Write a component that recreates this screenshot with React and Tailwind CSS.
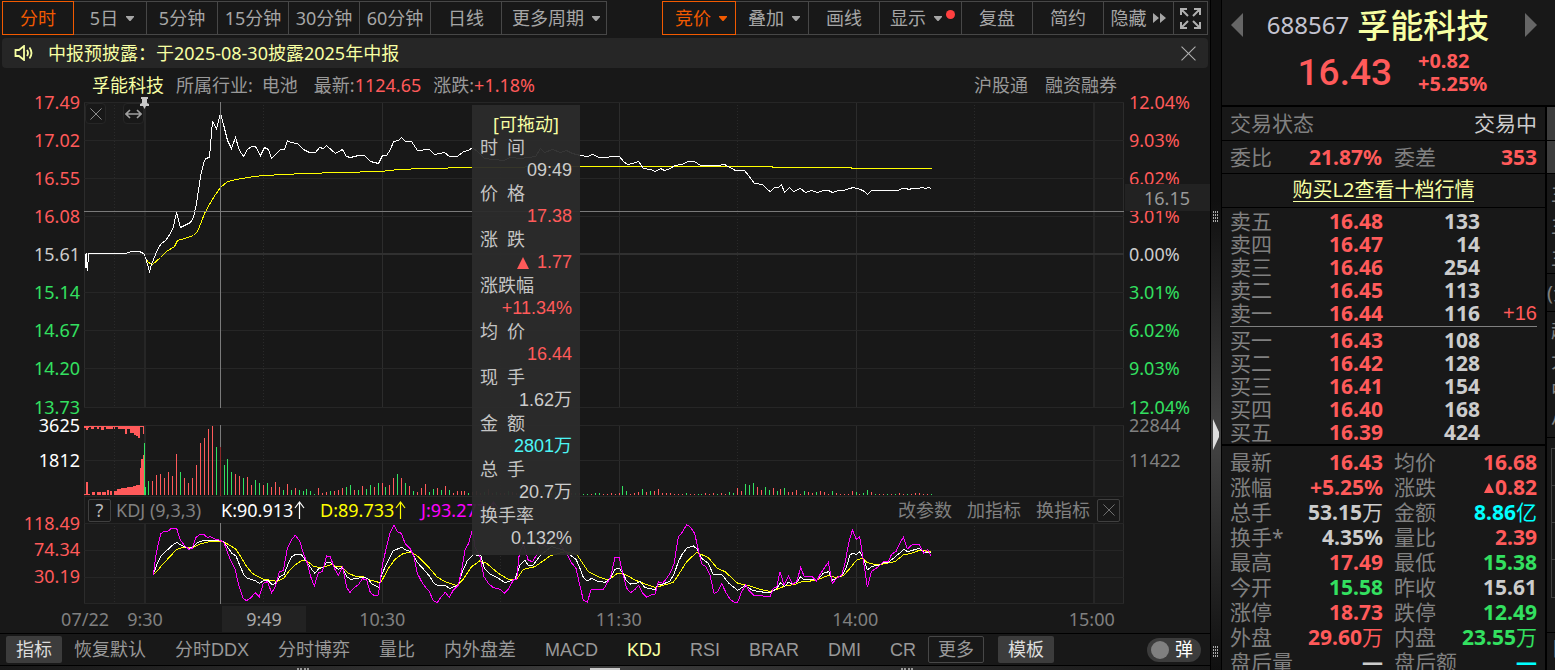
import React, {useState} from 'react'
import clsx from 'clsx'

const RED = 'text-[#ff5a5a]'
const GREEN = 'text-[#33e060]'
const GREY = 'text-[#cccccc]'
const CYAN = 'text-[#00ffff]'

const periods = [
	{ name: '分时', width: 'w-[72px]', active: true },
	{ name: '5日', width: 'w-[74px]', caret: true },
	{ name: '5分钟', width: 'w-[72px]' },
	{ name: '15分钟', width: 'w-[72px]' },
	{ name: '30分钟', width: 'w-[72px]' },
	{ name: '60分钟', width: 'w-[72px]' },
	{ name: '日线', width: 'w-[72px]' },
	{ name: '更多周期', width: 'w-[106px]', caret: true }
]

const tools = [
	{ name: '竞价', width: 'w-[74px]', active: true, caret: true },
	{ name: '叠加', width: 'w-[74px]', caret: true },
	{ name: '画线', width: 'w-[72px]' },
	{ name: '显示', width: 'w-[83px]', caret: true, dot: true },
	{ name: '复盘', width: 'w-[72px]' },
	{ name: '简约', width: 'w-[72px]' },
	{ name: '隐藏', width: 'w-[71px]', forward: true }
]

const priceScale = ['17.49', '17.02', '16.55', '16.08', '15.61', '15.14', '14.67', '14.20', '13.73']
const percentScale = ['12.04%', '9.03%', '6.02%', '3.01%', '0.00%', '3.01%', '6.02%', '9.03%', '12.04%']

const hoverInfo = [
	{ label: '时\u2002间', value: '09:49', color: GREY },
	{ label: '价\u2002格', value: '17.38', color: RED },
	{ label: '涨\u2002跌', value: '1.77', color: RED, up: true },
	{ label: '涨跌幅', value: '+11.34%', color: RED },
	{ label: '均\u2002价', value: '16.44', color: RED },
	{ label: '现\u2002手', value: '1.62万', color: GREY },
	{ label: '金\u2002额', value: '2801万', color: 'text-[#4df5f5]' },
	{ label: '总\u2002手', value: '20.7万', color: GREY },
	{ label: '换手率', value: '0.132%', color: GREY }
]

const indicators = ['恢复默认', '分时DDX', '分时博弈', '量比', '内外盘差', 'MACD', 'KDJ', 'RSI', 'BRAR', 'DMI', 'CR']

const sells = [
	['卖五', '16.48', '133'],
	['卖四', '16.47', '14'],
	['卖三', '16.46', '254'],
	['卖二', '16.45', '113'],
	['卖一', '16.44', '116', '+16']
]

const buys = [
	['买一', '16.43', '108'],
	['买二', '16.42', '128'],
	['买三', '16.41', '154'],
	['买四', '16.40', '168'],
	['买五', '16.39', '424']
]

// label, value, unit, color
const stats = [
	[['最新', '16.43', '', RED], ['均价', '16.68', '', RED]],
	[['涨幅', '+5.25%', '', RED], ['涨跌', '0.82', '', RED, true]],
	[['总手', '53.15', '万', GREY], ['金额', '8.86', '亿', CYAN]],
	[['换手*', '4.35%', '', GREY], ['量比', '2.39', '', RED]],
	[['最高', '17.49', '', RED], ['最低', '15.38', '', GREEN]],
	[['今开', '15.58', '', GREEN], ['昨收', '15.61', '', GREY]],
	[['涨停', '18.73', '', RED], ['跌停', '12.49', '', GREEN]],
	[['外盘', '29.60', '万', RED], ['内盘', '23.55', '万', GREEN]],
	[['盘后量', '—', '', GREY], ['盘后额', '—', '', CYAN]]
]

const preOpenLine = '85,254 85,268 86,254 86,266 87,271 88,254 125,254 131,252 139,252 143,254 145,257'
const priceLine = '145,257 147,264 149,271 151,264 155,254 158,247 161,243 165,240 170,233 173,226 176,212 180,227 184,225 190,222 193,217 196,203 200,176 203,163 205,158 209,157 212,121 216,128 220,113 223,124 227,140 231,148 235,137 239,150 243,156 247,149 251,146 255,146 260,155 264,147 268,149 271,158 276,153 280,149 284,149 287,140 290,142 297,143 303,149 309,152 315,152 319,147 323,148 326,145 335,153 342,149 346,156 350,157 358,155 364,155 370,161 378,163 382,155 386,155 390,149 393,141 398,140 401,137 405,141 411,141 417,150 429,149 434,154 444,152 449,156 457,156 463,151 468,150 472,147 478,152 484,158 503,160 510,157 520,158 535,156 540,148 544,152 552,149 560,152 566,150 572,153 580,155 587,156 592,154 599,157 619,156 623,161 627,164 632,163 638,161 643,168 650,169 655,171 660,168 664,170 670,168 674,165 682,164 687,161 694,161 700,165 717,165 724,164 735,170 744,170 748,175 754,183 762,184 768,190 770,191 774,187 778,187 781,184 784,192 789,187 793,191 800,188 805,192 811,190 817,192 823,190 828,190 832,192 838,190 843,190 849,188 853,187 860,189 864,191 867,194 871,190 897,190 902,188 906,188 908,189 912,188 917,188 922,187 925,188 928,187 931,188'
const averageLine = '145,258 148,262 152,264 160,257 166,251 174,246 177,240 184,238 193,235 197,231 201,221 204,213 210,202 215,194 220,187 227,181 236,179 247,177 263,175 284,174 304,173 340,172 380,171 398,169 424,168 472,167 580,166 771,166 773,167 850,167 852,168 931,168'

// one entry for each minute, the letter gives the direction
const volumes = ('g14 r14 r20 r21 r17 r23 r19 r41 g23 r17 r12 r17 r30 r52 r57 r66 r69 g48 r48 g30 g36 g23 r21 r19 g17 r18 r10 g15 g12 r10 '
	+ 'g12 r8 r13 r8 g5 r11 g5 r7 g5 g4 g6 g4 g1 r7 r2 r3 g4 r4 r5 r7 g8 g10 r5 g5 r9 g6 g10 r8 g12 r12 '
	+ 'g8 r10 r17 g21 r17 g12 r9 g4 r3 r7 r11 g3 g6 r7 g5 r9 g5 r2 r4 r4 r4 g2 '
	+ 'r3 r4 r2 g3 r6 r2 g3 r2 r2 g4 r3 r2 g2 r3 r3 g2 r4 r2 g3 r2 r2 g3 r2 r3 g2 r2 g2 r2 '
	+ 'g1 g1 r1 g2 g2 r1 r1 r2 r1 r2 g9 g4 r1 r2 r3 g6 r3 g4 r4 r6 r2 '
	+ 'r2 r2 r1 r1 r1 g2 r1 r1 g1 g1 r2 r1 r2 g1 r2 r1 g3 g2 r7 r4 g11 g10 g12 r8 '
	+ 'r5 g8 g5 r7 g4 r6 g7 r3 r3 r5 r1 g4 r3 r2 g3 r4 r3 r1 g4 r2 r1 r1 r1 r4 g3 r1 g2 g5 r3 '
	+ 'g1 r1 r1 g1 r1 g1 r2 r1 g1 r1 r2 r2 r1 r1 g1').split(' ')

// call auction volume: x, width, height
const auctionBottom = [[84, 6, 1], [86, 2, 13], [92, 3, 3], [97, 4, 3], [102, 4, 3], [107, 2, 5], [110, 2, 4], [114, 3, 4], [117, 4, 6], [121, 6, 7], [127, 6, 8], [133, 3, 9], [136, 4, 10], [140, 1, 27], [141, 2, 36], [143, 1, 40]]
const auctionTop = [[84, 5, 2], [86, 2, 4], [91, 3, 3], [97, 2, 3], [101, 3, 4], [106, 3, 3], [109, 4, 3], [114, 1, 3], [118, 4, 3], [122, 3, 3], [125, 2, 8], [127, 4, 3], [130, 4, 7], [134, 2, 9], [136, 2, 10], [138, 2, 12], [141, 2, 1], [143, 1, 8]]

// [start x, points] segments, in units of a third of a pixel
const kdj = [
	{
		color: '#ffff00',
		segments: [
			[0, '458,524 470,515 482,500 505,475 530,448 545,443 577,443 600,432 625,426 668,425 685,433 708,448 722,470 740,500 757,520 775,530 790,537 832,544 852,534 870,510 885,495 905,482 920,482 940,498 957,503 975,500 995,493 1010,500 1025,500 1045,520 1065,528 1090,530 1110,540 1140,548'],
			[1140, '5,543 25,505 45,478 70,460 95,457 115,470 145,500 170,530 195,545 230,557 250,537 275,500 300,482 320,490 355,520 385,538 410,538 430,508 465,500 510,468 555,455 590,463 605,485 625,515 655,530 685,540 712,520 735,523 765,540 795,552 825,562 850,556 880,547 895,525 920,485 950,457 985,473 1012,505 1035,515 1073,550 1110,558'],
			[2280, '0,568 30,574 50,568 75,558 105,553 125,545 165,542 205,526 225,532 250,527 270,505 290,480 308,474 320,487 345,494 370,492 405,485 430,465 460,458 480,450 512,455']
		]
	},
	{
		color: '#ffffff',
		segments: [
			[0, '460,522 470,495 482,470 493,458 505,447 517,436 530,427 541,434 565,445 577,443 592,428 612,421 661,421 672,427 684,443 696,460 708,468 720,498 732,525 742,535 766,542 778,550 790,543 803,540 817,555 828,548 840,530 852,524 865,490 875,470 887,463 905,465 920,485 935,508 945,520 957,505 968,503 980,487 992,488 1004,500 1015,508 1027,503 1040,530 1052,538 1090,532 1103,535 1115,552 1137,563'],
			[1140, '3,530 20,490 40,452 65,442 77,450 95,455 110,485 130,507 150,530 160,548 172,556 195,557 210,565 235,555 245,520 262,482 280,463 303,468 313,505 330,522 355,535 375,548 405,538 420,495 435,480 445,497 458,497 482,465 515,440 550,450 570,465 588,478 598,500 610,532 622,543 635,535 650,543 675,547 690,537 705,508 718,505 730,522 740,543 752,552 768,550 780,545 795,563 825,569 835,552 850,552 870,543 883,520 895,485 908,460 922,443 940,438 952,448 965,475 985,490 1000,525 1025,523 1047,550 1073,571 1095,557 1120,572'],
			[2280, '0,575 30,579 50,566 62,547 73,560 85,547 98,552 110,547 122,530 133,540 157,537 170,542 190,520 206,515 218,540 245,527 258,505 270,465 277,460 290,463 300,455 310,475 322,510 335,500 360,494 372,487 385,487 400,475 418,460 432,448 443,455 478,445 491,457 512,458']
		]
	},
	{
		color: '#ff00ff',
		segments: [
			[0, '459,526 462,510 468,465 475,430 482,402 490,396 505,393 513,386 530,385 540,418 555,438 567,448 577,445 588,412 600,403 612,404 622,412 632,410 645,417 661,421 672,428 684,462 696,490 706,510 716,555 730,596 740,602 752,594 766,578 778,590 790,550 802,545 815,578 826,560 838,515 850,512 862,445 875,418 886,406 900,425 910,460 922,490 932,530 943,558 955,518 967,515 980,468 991,470 1003,505 1015,525 1028,500 1040,562 1050,577 1063,562 1075,555 1087,536 1100,540 1111,578 1123,587 1135,585'],
			[1140, '8,490 20,440 30,400 42,374 52,395 64,400 76,432 90,445 102,470 112,520 125,545 135,560 148,575 160,602 172,608 184,590 196,577 208,592 220,570 235,555 245,510 255,450 265,432 277,390 285,440 300,470 312,530 325,550 340,563 360,568 373,580 385,568 400,540 410,538 418,460 430,430 445,482 458,484 470,465 482,430 500,440 520,400 545,440 560,460 572,485 588,505 598,550 610,600 622,606 634,567 650,570 670,568 680,552 692,530 705,472 718,473 728,520 740,565 752,578 765,568 776,556 787,578 800,592 812,585 825,583 835,545 848,550 860,535 870,520 882,492 895,410 907,397 920,374 932,382 944,400 955,450 965,492 978,500 990,525 1002,580 1013,575 1025,550 1038,578 1050,597 1063,607 1073,607 1085,575 1097,555 1108,573 1120,585 1133,587'],
			[2280, '0,587 30,590 40,565 50,562 60,515 72,555 85,528 98,553 110,545 122,503 133,530 157,530 170,543 182,520 205,487 217,550 230,535 245,525 255,490 266,430 277,390 289,418 299,410 310,480 322,562 334,515 355,500 372,483 385,485 395,462 408,455 418,432 430,412 442,447 455,435 478,433 491,460 503,448 512,467']
		]
	}
]

const joinSegments = (segments) =>
	segments.map(([start, points]) =>
		points.split(' ').map(p => {
			const [x, y] = p.split(',').map(Number)
			return `${x + start},${y}`
		}).join(' ')
	).join(' ')


const Caret = () => (
	<svg width="8" height="5" viewBox="0 0 8 5" className="shrink-0"><path d="M0 0h8v1L4.500 5h-1L0 1z" fill="currentColor" /></svg>
)

const Cross = ({size}) => (
	<svg width={size} height={size} viewBox="0 0 14 14"><path d="M.5.5l13 13M13.500.5l-13 13" stroke="currentColor" strokeWidth="1" fill="none" /></svg>
)

const UpArrow = () => (
	<svg width="11" height="18" viewBox="0 0 11 18" className="ml-px"><path d="M5.500 1v17M1 7l4.500-6L10 7" stroke="currentColor" strokeWidth="1.200" fill="none" /></svg>
)

const Grip = ({className}) => (
	<svg width="6" height="12" viewBox="0 0 6 12" className={className}>
		{[0, 3, 6, 9].map(y => [0, 2, 4].map(x => <rect key={x + '-' + y} x={x} y={y} width="1" height="2" fill="#aaaaaa" />))}
	</svg>
)

function ToolButton({name, width, active, caret, dot, forward})
{
	return (
		<button
			type="button"
			className={clsx(
				'relative -ml-px flex h-[34px] items-center justify-center border text-[18px] whitespace-nowrap',
				width,
				forward && 'gap-[6px]',
				caret && 'gap-2',
				caret && 'pl-1',
				active ? 'z-10 border-[#f25a00] text-[#f25a00]' : 'border-[#474747] text-[#a6a6a6]'
			)}
		>
			{name}
			{caret && <Caret />}
			{dot && <span className="-ml-1 mb-2 size-[9px] rounded-full bg-[#ff4040]" />}
			{forward && <svg width="14" height="10" viewBox="0 0 14 10"><path d="M0 0l6 5-6 5zM7 0l6 5-6 5z" fill="currentColor" /></svg>}
		</button>
	)
}

// vertical lines and shaded margins that all three panels share
function GridColumns({top, bottom, scale = 1})
{
	const line = { vectorEffect: 'non-scaling-stroke', shapeRendering: 'crispEdges' }
	return (
		<g>
			<rect x={84 * scale} y={top} width={61 * scale} height={bottom - top} fill="#1b1b1b" />
			<rect x={1094 * scale} y={top} width={30 * scale} height={bottom - top} fill="#1b1b1b" />
			{[84.5, 382.5, 619.5, 856.5, 1123.5].map(x =>
				<line key={x} x1={x * scale} x2={x * scale} y1={top} y2={bottom} stroke="#2c2c2c" {...line} />
			)}
			{[145, 1094].map(x =>
				<line key={x} x1={x * scale} x2={x * scale} y1={top} y2={bottom} stroke="#262626" strokeWidth="2" {...line} />
			)}
			{[114.5, 263.5, 500.5, 737.5, 974.5].map(x =>
				<line key={x} x1={x * scale} x2={x * scale} y1={top} y2={bottom} stroke="#2a2a2a" strokeDasharray="1 2" {...line} />
			)}
		</g>
	)
}

function Rows({ys, scale = 1})
{
	return ys.map(y =>
		<line key={y} x1={84 * scale} x2={1124 * scale} y1={y} y2={y} stroke="#262626" vectorEffect="non-scaling-stroke" shapeRendering="crispEdges" />
	)
}

function PriceChart()
{
	return (
		<svg className="h-full w-full" viewBox="84 102 1040 306" preserveAspectRatio="none" shapeRendering="crispEdges" fill="none">
			<GridColumns top={102} bottom={408} />
			<Rows ys={[102.5, 140.5, 178.5, 216.5, 292.5, 330.5, 368.5, 407.5]} />
			<line x1="84" x2="1124" y1="254" y2="254" stroke="#303030" strokeWidth="2" />
			<g transform="translate(.5 .5)">
				<polyline points={averageLine} stroke="#ffff00" />
				<polyline points={priceLine} stroke="#ffffff" />
			</g>
			<polyline points={preOpenLine} transform="translate(.5 -.5)" stroke="#ffffff" />
			<path d="M220.500 102v306M84 211.500h1040" stroke="#7a7a7a" />
		</svg>
	)
}

function VolumeChart()
{
	return (
		<svg className="h-full w-full" viewBox="84 425 1040 71" preserveAspectRatio="none" shapeRendering="crispEdges" fill="none">
			<GridColumns top={425} bottom={496} />
			<Rows ys={[425.5, 460.5]} />
			{auctionBottom.map(([x, w, h]) => <rect key={x} x={x} y={495 - h} width={w} height={h} fill="#ff5a5a" />)}
			{auctionTop.map(([x, w, h]) => <rect key={x} x={x} y={426} width={w} height={h} fill="#ff5a5a" />)}
			<path d="M84 426.500h60" stroke="#ff5a5a" />
			<path d="M144.500 443v52M145.500 487v8" stroke="#33e060" />
			{volumes.map((v, i) =>
				<rect
					key={i}
					x={Math.round(144.5 + 3.95 * (i + 1))}
					y={495 - Number(v.slice(1))}
					width="1"
					height={v.slice(1)}
					fill={v[0] === 'r' ? '#ff5a5a' : '#33e060'}
				/>
			)}
			<path d="M220.500 425v22" stroke="#7a7a7a" />
			<path d="M220.500 447v49" stroke="#8c2a2a" />
		</svg>
	)
}

function KdjChart()
{
	return (
		<svg className="h-full w-full" viewBox="252 369 3120 243" preserveAspectRatio="none" shapeRendering="crispEdges" fill="none">
			<GridColumns top={369} bottom={612} scale={3} />
			<Rows ys={[370.5, 451.5, 532.5, 610.5]} scale={3} />
			<line x1="661.5" x2="661.5" y1="369" y2="612" stroke="#7a7a7a" vectorEffect="non-scaling-stroke" />
			{kdj.map(({color, segments}) =>
				<polyline key={color} points={joinSegments(segments)} stroke={color} vectorEffect="non-scaling-stroke" />
			)}
		</svg>
	)
}

// labels are centred on the grid lines, so each one is a box without height
function Scale({values, colorOf, className})
{
	return (
		<div className={clsx('-mt-px mb-px flex flex-col justify-between', className)}>
			{values.map((value, i) =>
				<div key={i} className={clsx('flex h-px items-center', colorOf(i))}>{value}</div>
			)}
		</div>
	)
}

const scaleColor = (i) => i < 4 ? RED : i === 4 ? GREY : GREEN

function HoverCard()
{
	return (
		<div className="absolute top-[3px] left-[472px] z-10 w-[108px] bg-[#2b2b2b]/95 px-2 pt-[7px] pb-[5px] text-[18px] leading-[23px] text-[#c4c4c4]">
			<div className="text-center leading-[24px] text-[#f7ffa3]">[可拖动]</div>
			<dl>
				{hoverInfo.map(({label, value, color, up}) => (
					<div key={label}>
						<dt>{label}</dt>
						<dd className={clsx("flex items-center justify-end gap-2 font-['Liberation_Sans','Noto_Sans_CJK_SC',sans-serif]", color)}>
							{up && <svg width="12" height="12" viewBox="0 0 12 12"><path d="M6 0l6 12H0z" fill="currentColor" /></svg>}
							{value}
						</dd>
					</div>
				))}
			</dl>
		</div>
	)
}

function Charts()
{
	return (
		<div className="relative flex min-h-0 flex-1 flex-col text-[18px] leading-none">
			<div className="flex min-h-0 flex-1">
				<Scale values={priceScale} colorOf={scaleColor} className="w-[84px] items-end pr-1" />
				<div className="relative min-w-0 flex-1">
					<div className="absolute inset-0"><PriceChart /></div>
					<button type="button" aria-label="关闭" className="absolute top-px left-px flex size-[21px] items-center justify-center rounded border border-[#262626] bg-[#181818] text-[#a0a0a0]">
						<Cross size={12} />
					</button>
					<button type="button" aria-label="拉伸" className="absolute top-px left-[39px] flex size-[21px] items-center justify-center rounded border border-[#262626] bg-[#181818] text-[#a0a0a0]">
						<svg width="17" height="10" viewBox="0 0 17 10"><path d="M1 5h15M5 1L1 5l4 4M12 1l4 4-4 4" stroke="currentColor" strokeWidth="1.600" fill="none" /></svg>
					</button>
					<svg width="9" height="12" viewBox="0 0 9 12" className="absolute -top-[5px] left-[56px]"><path d="M1 0h7v2H7v4l2 1v2H6l-1.500 3L3 9H0V7l2-1V2H1z" fill="#c8c8c8" /></svg>
				</div>
				<div className="relative flex w-[86px]">
					<Scale values={percentScale} colorOf={scaleColor} className="pl-[5px]" />
					<div className="absolute top-[82px] right-0 left-px flex h-[27px] items-center justify-end bg-[#222222] pr-5 text-[#999999]">16.15</div>
				</div>
			</div>

			<div className="mt-[17px] flex h-[71px]">
				<Scale values={['3625', '1812', '']} colorOf={() => 'text-white'} className="w-[84px] items-end pr-1" />
				<div className="min-w-0 flex-1"><VolumeChart /></div>
				<Scale values={['22844', '11422', '']} colorOf={() => 'text-[#808080]'} className="w-[86px] pl-[5px]" />
			</div>

			<div className="mr-[86px] ml-[84px] flex h-[27px] items-center border border-b-0 border-[#262626] pr-[3px] pl-[3px] text-[#808080]">
				<button type="button" aria-label="帮助" className="flex size-[23px] items-center justify-center rounded-xs border border-[#404040] text-[#bbbbbb]">?</button>
				<span className="ml-[5px] w-[105px]">KDJ (9,3,3)</span>
				<span className="flex w-[99px] items-center text-white">K:90.913<UpArrow /></span>
				<span className="flex w-[101px] items-center text-[#ffff00]">D:89.733<UpArrow /></span>
				<span className="flex items-center text-[#ff00ff]">J:93.277<UpArrow /></span>
				<div className="ml-auto flex items-center gap-[15px]">
					<button type="button">改参数</button>
					<button type="button">加指标</button>
					<button type="button">换指标</button>
				</div>
				<button type="button" aria-label="关闭指标" className="ml-[7px] flex size-[23px] items-center justify-center rounded-xs border border-[#404040]">
					<Cross size={12} />
				</button>
			</div>

			<div className="flex h-[81px]">
				<Scale values={['118.49', '74.34', '30.19', '']} colorOf={() => RED} className="w-[84px] items-end pr-1" />
				<div className="min-w-0 flex-1"><KdjChart /></div>
				<div className="w-[86px]" />
			</div>

			<div className="relative flex h-[29px] items-center text-center text-[#808080]">
				<span className="w-[109px] text-right">07/22</span>
				<span className="w-[72px]">9:30</span>
				<span className="w-[83px]" />
				<span className="flex-1">10:30</span>
				<span className="flex-1">11:30</span>
				<span className="flex-1">14:00</span>
				<span className="flex-1">15:00</span>
				<span className="absolute top-[2px] left-[222px] flex h-[26px] w-[84px] items-center justify-center bg-[#222222] text-[#aaaaaa]">9:49</span>
			</div>

			<HoverCard />
		</div>
	)
}

function IndicatorTabs()
{
	const [current, setCurrent] = useState('KDJ')
	const [popup, setPopup] = useState(false)

	return (
		<div className="flex h-[33px] shrink-0 items-center border-y border-black pr-[9px] pl-[6px] font-['Liberation_Sans','Noto_Sans_CJK_SC',sans-serif] text-[18px] leading-none whitespace-nowrap text-[#999999]">
			<button type="button" className="h-[27px] w-[56px] rounded-xs bg-[#3c3c3c] text-[#dddddd]">指标</button>
			<div className="ml-[12px] flex gap-[29px]">
				{indicators.map(name =>
					<button
						key={name}
						type="button"
						onClick={() => setCurrent(name)}
						className={current === name ? 'text-[#f7ffa3]' : ''}
					>
						{name}
					</button>
				)}
			</div>
			<button type="button" className="ml-[12px] h-[27px] w-[56px] rounded-xs border border-[#474747]">更多</button>
			<button type="button" className="ml-[14px] h-[27px] w-[56px] rounded-xs bg-[#3c3c3c] text-[#dddddd]">模板</button>
			<label className="ml-auto flex h-[24px] w-[54px] items-center justify-between rounded-full bg-[#3c3c3c] pr-2 pl-1 text-white">
				<input type="checkbox" className="sr-only" checked={popup} onChange={e => setPopup(e.target.checked)} />
				<span className="size-[18px] rounded-full bg-[#808080]" />
				弹
			</label>
		</div>
	)
}

function OrderTable({rows})
{
	return (
		<table className="w-full table-fixed">
			<tbody>
				{rows.map(([label, price, amount, change]) => (
					<tr key={label} className="h-[23px] text-right leading-[23px]">
						<th scope="row" className="w-[63px] p-0 text-left font-normal text-[#808080]">{label}</th>
						<td className={clsx('w-[90px] p-0 font-bold', RED)}>{price}</td>
						<td className={clsx('w-[97px] p-0 font-bold', GREY)}>{amount}</td>
						<td className={clsx("p-0 font-['Liberation_Sans',sans-serif] text-[20px]", RED)}>{change}</td>
					</tr>
				))}
			</tbody>
		</table>
	)
}

function StatCell({cell})
{
	const [label, value, unit, color, up] = cell
	return (
		<div className="flex h-[25px] items-center justify-between">
			<dt className="text-[#808080]">{label}</dt>
			<dd className={clsx('flex items-center', color)}>
				{up && <svg width="10" height="10" viewBox="0 0 10 10" className="mr-px"><path d="M5 0l5 10H0z" fill="currentColor" /></svg>}
				<span className="font-bold">{value}</span>
				{unit}
			</dd>
		</div>
	)
}

function QuotePanel()
{
	return (
		<aside className="flex w-[333px] shrink-0 flex-col text-[21px] leading-none">
			<header className="h-[107px] shrink-0 border-b-2 border-black px-2 pt-1">
				<div className="flex h-[42px] items-center justify-between pr-[10px] pl-px">
					<button type="button" aria-label="上一只"><svg width="12" height="24" viewBox="0 0 12 24"><path d="M12 0v24L0 12z" fill="#666666" /></svg></button>
					<h1 className="flex items-center gap-2 pr-3">
						<span className="text-[24px] text-[#c4c4d0]">688567</span>
						<span className="text-[33px] font-medium text-[#f7ffa3]">孚能科技</span>
					</h1>
					<button type="button" aria-label="下一只"><svg width="12" height="24" viewBox="0 0 12 24"><path d="M0 0v24l12-12z" fill="#666666" /></svg></button>
				</div>
				<div className={clsx('flex items-center justify-center gap-[26px] pt-[3px] pl-2', RED)}>
					<span className="font-['Roboto','Liberation_Sans',sans-serif] text-[37px] font-medium">16.43</span>
					<span className="text-[20px] leading-[23px] font-bold">+0.82<br />+5.25%</span>
				</div>
			</header>

			<div className="flex min-h-0 flex-1">
				<div className="min-w-0 flex-1">
					<div className="flex h-[34px] items-center justify-between border-b border-black px-2">
						<span className="text-[#808080]">交易状态</span>
						<span className={GREY}>交易中</span>
					</div>
					<div className="flex h-[33px] items-center border-b border-black px-2 text-[#808080]">
						<span>委比</span>
						<b className={clsx('ml-auto', RED)}>21.87%</b>
						<span className="ml-3">委差</span>
						<b className={clsx('w-[101px] text-right', RED)}>353</b>
					</div>
					<div className="flex h-[34px] items-center justify-center border-b border-black text-[20px]">
						<a href="#l2" className="border-b border-[#f7ffa3] pb-px text-[#f7ffa3]">购买L2查看十档行情</a>
					</div>
					<div className="border-b-2 border-black px-2 pt-[2px]">
						<OrderTable rows={sells} />
						<hr className="mt-px mb-[2px] border-[#808080]" />
						<OrderTable rows={buys} />
					</div>
					<div className="px-2 pt-1">
						{stats.map(([left, right]) => (
							<dl key={left[0]} className="grid grid-cols-[153px_1fr] gap-x-[11px]">
								<StatCell cell={left} />
								<StatCell cell={right} />
							</dl>
						))}
					</div>
				</div>
				<SideStrip />
			</div>
		</aside>
	)
}

// the next column of the terminal, of which only the edge is in view
function SideStrip()
{
	return (
		<div className="w-[10px] shrink-0 overflow-hidden border-l-2 border-black text-[20px] whitespace-nowrap text-[#808080]">
			<div className="h-[34px] border-b border-black bg-[#3c3c3c]" />
			<div className="h-[33px] border-b border-black bg-[#3c3c3c]" />
			<div className="h-[100px] border-b border-black pt-1 pl-1 leading-[32px]">主<br />主<br />主</div>
			<div className="h-[38px] border-b border-black leading-[38px]">(元)</div>
			<div className="h-[126px] border-b border-black pt-1 pl-1 leading-[30px]">超<br />大<br />中<br />小</div>
			<div className="h-[195px] border-b border-black pt-[10px] pl-1">
				<div className="w-8 border border-[#404040]">
					<div className="h-[37px] border-b border-[#404040]" />
					<div className="h-[37px] border-b border-[#404040]" />
					<div className="h-[37px] border-b border-[#404040]" />
					<div className="h-[37px]" />
				</div>
			</div>
			<div className="pl-1 leading-[32px]">日</div>
		</div>
	)
}

export default function App()
{
	return (
		<div className="flex h-screen overflow-hidden bg-[#181818] font-['Noto_Sans','Noto_Sans_CJK_SC',sans-serif]">
			<main className="flex min-w-0 flex-1 flex-col">
				<nav className="flex shrink-0 pt-px pr-[2px] pl-[3px] leading-none">
					{periods.map(item => <ToolButton key={item.name} {...item} />)}
					<div className="ml-auto flex">
						{tools.map(item => <ToolButton key={item.name} {...item} />)}
						<button type="button" aria-label="全屏" className="-ml-px flex h-[34px] w-[35px] items-center justify-center border border-[#474747] text-[#b0b0b0]">
							<svg width="21" height="21" viewBox="0 0 21 21" fill="none" stroke="currentColor" strokeWidth="2">
								<path d="M1 7V1h6M14 1h6v6M20 14v6h-6M7 20H1v-6M1 1l7 7M20 1l-7 7M20 20l-7-7M1 20l7-7" />
							</svg>
						</button>
					</div>
				</nav>

				<div className="mx-[2px] mt-[3px] flex h-[30px] shrink-0 items-center rounded bg-[#262626] pr-3 pl-3 text-[18px] leading-none text-[#f7ffa3]">
					<svg width="20" height="16" viewBox="0 0 20 16" fill="none" stroke="currentColor" strokeWidth="1.800">
						<path d="M1.500 5v6h3.500l5 4V1L5 5zM13 5q2 3 0 6M15.500 2.500q4 5.500 0 11" />
					</svg>
					<p className="ml-[14px]">中报预披露：于2025-08-30披露2025年中报</p>
					<button type="button" aria-label="关闭公告" className="ml-auto text-[#b0b0b0]"><Cross size={15} /></button>
				</div>

				<div className="flex h-[34px] shrink-0 items-center pr-[93px] pl-[92px] text-[18px] leading-none whitespace-nowrap text-[#999999]">
					<span className="text-[#f7ffa3]">孚能科技</span>
					<span className="ml-3">所属行业:&ensp;电池</span>
					<span className="ml-4">最新:<span className={RED}>1124.65</span></span>
					<span className="ml-3">涨跌:<span className={RED}>+1.18%</span></span>
					<span className="ml-auto">沪股通</span>
					<span className="ml-[17px]">融资融券</span>
				</div>

				<Charts />
				<IndicatorTabs />
				<div className="flex h-1 shrink-0 items-end justify-between bg-linear-to-r from-[#181818] via-[#3c3c3c] to-[#181818] px-[297px]">
					<span className="h-[2px] w-3 border-b-2 border-dotted border-[#999999]" />
					<span className="h-[2px] w-[30px] bg-[#cccccc]" />
					<span className="h-[2px] w-3 border-b-2 border-dotted border-[#999999]" />
				</div>
			</main>

			<div className="flex w-3 shrink-0 flex-col items-center justify-between border-x border-black bg-linear-to-b from-[#101010] from-30% via-[#444444] via-65% to-[#101010] pt-[211px] pb-3">
				<Grip />
				<svg width="6" height="31" viewBox="0 0 6 31"><path d="M0 0l6 13v5L0 31z" fill="#dddddd" /></svg>
				<Grip />
			</div>

			<QuotePanel />
		</div>
	)
}
